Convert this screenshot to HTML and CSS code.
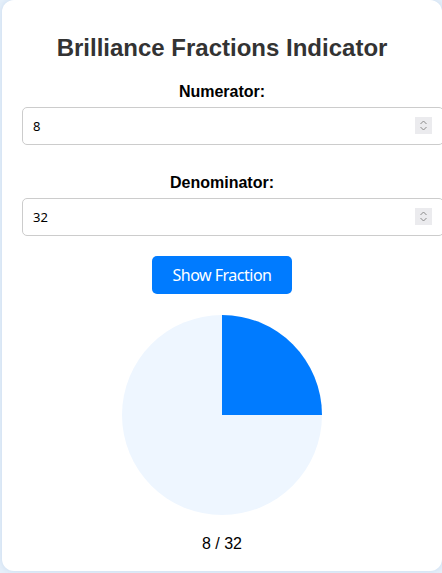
FILE: index.html
```html
<!DOCTYPE html>
<html>
<head>
<meta charset="utf-8">
<link rel="stylesheet" href="styles.css">
</head>
<body>
<div class="card">
  <h1 class="title">Brilliance Fractions Indicator</h1>
  <div class="group">
    <label class="label" for="num">Numerator:</label>
    <div class="field-wrap">
      <input class="field" id="num" type="number" value="8">
      <span class="spin"><svg width="17" height="17" viewBox="0 0 17 17"><path d="M5.5 7 L8.5 4 L11.5 7" fill="none" stroke="#8a8a8a" stroke-width="1"/><path d="M5.5 10 L8.5 13 L11.5 10" fill="none" stroke="#8a8a8a" stroke-width="1"/></svg></span>
    </div>
  </div>
  <div class="group">
    <label class="label" for="den">Denominator:</label>
    <div class="field-wrap">
      <input class="field" id="den" type="number" value="32">
      <span class="spin"><svg width="17" height="17" viewBox="0 0 17 17"><path d="M5.5 7 L8.5 4 L11.5 7" fill="none" stroke="#8a8a8a" stroke-width="1"/><path d="M5.5 10 L8.5 13 L11.5 10" fill="none" stroke="#8a8a8a" stroke-width="1"/></svg></span>
    </div>
  </div>
  <button class="btn">Show Fraction</button>
  <div class="pie">
    <svg width="200" height="200" viewBox="0 0 200 200">
      <circle cx="100" cy="100" r="100" fill="#eef6ff"/>
      <path d="M100 100 L100 0 A100 100 0 0 1 200 100 Z" fill="#007bff"/>
    </svg>
  </div>
  <div class="result">8 / 32</div>
</div>
</body>
</html>
```

FILE: styles.css
```css
html, body {
  margin: 0;
  padding: 0;
}
body {
  background: #e6f0fa;
  font-family: "Liberation Sans", Arial, sans-serif;
  height: 573px;
  overflow: hidden;
}
.card {
  margin-left: 2px;
  width: 400px;
  height: 533px;
  padding: 20px 20px 18px;
  background: #ffffff;
  border-radius: 12px;
  box-shadow: 0 0 6px rgba(120, 160, 210, 0.25);
  display: flex;
  flex-direction: column;
  align-items: center;
}
.title {
  flex: none;
  margin: 14px 0 21px;
  font-size: 24px;
  line-height: 28px;
  font-weight: bold;
  color: #333333;
  text-align: center;
}
.group {
  flex: none;
  align-self: stretch;
  display: flex;
  flex-direction: column;
  margin-bottom: 29px;
}
.group + .group {
  margin-bottom: 20px;
}
.label {
  font-size: 16px;
  line-height: 18px;
  font-weight: bold;
  color: #000;
  text-align: center;
  margin-bottom: 6px;
}
.field-wrap {
  position: relative;
  height: 38px;
}
.field {
  display: block;
  width: 100%;
  height: 16px;
  padding: 10px;
  margin: 0;
  border: 1px solid #cccccc;
  border-radius: 5px;
  font-family: "Noto Sans", "Open Sans", sans-serif;
  font-size: 13px;
  line-height: 16px;
  color: #000;
  background: #fff;
  -moz-appearance: textfield;
}
.field::-webkit-inner-spin-button,
.field::-webkit-outer-spin-button {
  -webkit-appearance: none;
  margin: 0;
}
.spin {
  position: absolute;
  left: 393px;
  top: 10px;
  width: 17px;
  height: 17px;
  background: #ebebee;
}
.spin svg {
  display: block;
}
.btn {
  flex: none;
  width: 140px;
  height: 38px;
  border: none;
  border-radius: 5px;
  background: #007bff;
  color: #ffffff;
  font-family: "Noto Sans", "Open Sans", sans-serif;
  font-size: 16px;
  letter-spacing: -0.5px;
  padding: 0;
  margin-bottom: 21px;
}
.pie {
  flex: none;
  width: 200px;
  height: 200px;
  margin-bottom: 20px;
}
.pie svg {
  display: block;
}
.result {
  flex: none;
  font-size: 16px;
  line-height: 18px;
  color: #000;
}
```
